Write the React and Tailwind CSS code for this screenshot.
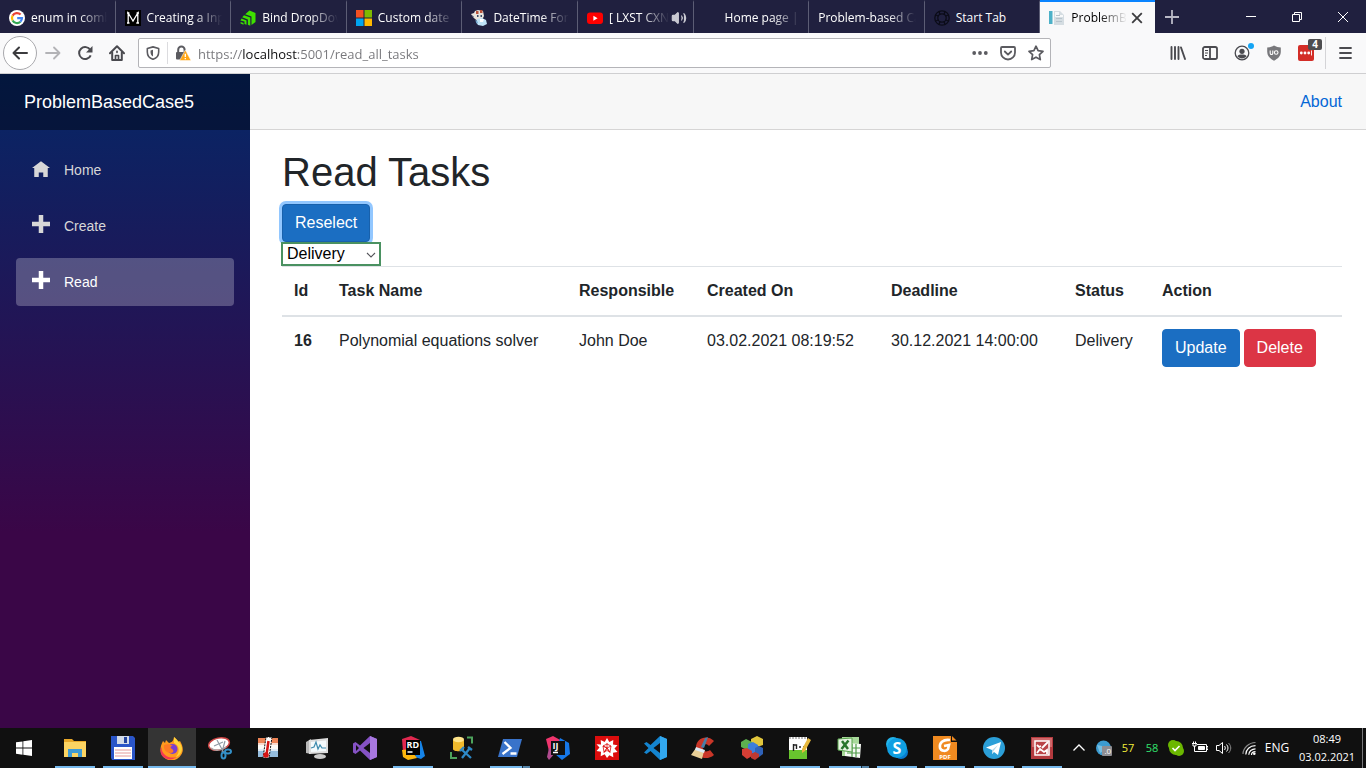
import React from "react";
import { Volume2 } from "lucide-react";

/* ---------- favicons ---------- */

const GoogleIcon = () => (
  <svg viewBox="0 0 16 16" className="size-4 shrink-0">
    <circle cx="8" cy="8" r="8" fill="#fff" />
    <g fill="none" strokeWidth="2.2">
      <path d="M11.6 4.6A5 5 0 0 0 3.6 5.6" stroke="#ea4335" />
      <path d="M3.6 5.6a5 5 0 0 0 0 4.8" stroke="#fbbc05" />
      <path d="M3.6 10.4a5 5 0 0 0 7.8 1.3" stroke="#34a853" />
      <path d="M11.4 11.7A5 5 0 0 0 13 8.1H8.2" stroke="#4285f4" />
    </g>
  </svg>
);

const MIcon = () => (
  <svg viewBox="0 0 16 16" className="size-4 shrink-0">
    <rect width="16" height="16" fill="#000" />
    <path d="M3.2 13V3l4.8 8 4.8-8v10M2 3h2.4M11.6 3H14M2 13h2.5M11.3 13H14" fill="none" stroke="#fff" strokeWidth="1.3" />
  </svg>
);

const TelerikIcon = () => (
  <svg viewBox="0 0 16 16" className="size-4 shrink-0">
    <path fill="#3ee000" d="M9.5.5 15.5 3v9l-4 3V6.5L5.2 4.2z" />
    <path fill="#3ee000" d="M4 5.2l6.3 2.3v8.3l-2.4-1V9.4L2.2 7.3z" />
    <path fill="#3ee000" d="M1.6 8.6l4.9 1.8v4.4l-2-.9v-2.5L.4 10.6zM.6 12l2.9 1.1v1.6L.6 13.5z" />
  </svg>
);

const MicrosoftIcon = () => (
  <svg viewBox="0 0 16 16" className="size-4 shrink-0">
    <path fill="#f25022" d="M0 0h7.5v7.5H0z" />
    <path fill="#7fba00" d="M8.5 0H16v7.5H8.5z" />
    <path fill="#00a4ef" d="M0 8.5h7.5V16H0z" />
    <path fill="#ffb900" d="M8.5 8.5H16V16H8.5z" />
  </svg>
);

const MascotIcon = () => (
  <svg viewBox="0 0 16 16" className="size-4 shrink-0">
    <path fill="#e8e4dc" d="M0 4l3-1 1-2 3-1 5 1 1 5-2 4-4 1-3-2-2-2z" />
    <path fill="#b8543c" d="M5 1h2.500v3H5zM9 0h2.500v3H9z" />
    <path fill="#3a4a66" d="M6 5h1.500v2H6zM9.500 5H11v2H9.500zM1 5l2 2H1.500z" />
    <path fill="#bfe3f7" d="M6 9l5-1 4 2 1 4-4 2-5-1-2-3z" />
    <path fill="#fff" d="M9 9h4l-1 3H9z" />
    <path fill="#6fa6cf" d="M4 10l3 2-1 2z" />
  </svg>
);

const YouTubeIcon = () => (
  <svg viewBox="0 0 16 16" className="size-4 shrink-0">
    <rect y="2.500" width="16" height="11.500" rx="3" fill="#f00" />
    <path d="M6.400 5.800v5l4.200-2.500z" fill="#fff" />
  </svg>
);

const RingIcon = () => (
  <svg viewBox="0 0 16 16" className="size-4 shrink-0" fill="none" stroke="#0b0c18" strokeWidth="1.300">
    <circle cx="8" cy="8" r="7.200" />
    <circle cx="8" cy="8" r="4.200" />
    <path d="M5 1.500l1 3M11 1.500l-1 3M1.500 5l3 1M1.500 11l3-1M14.500 5l-3 1M14.500 11l-3-1M5 14.500l1-3M11 14.500l-1-3" />
  </svg>
);

const DocumentIcon = () => (
  <svg viewBox="0 0 16 16" className="size-4 shrink-0">
    <path fill="#4db1c8" d="M0 1h3.500v13H0z" />
    <path fill="#d5dde2" d="M5 1h6l4 4v10H5z" />
    <path fill="#f7f9fa" d="M6 2h4v3h4v2H6z" />
    <path stroke="#b9c5cd" d="M7 5.500h4M7 8.500h6M7 11.500h6" />
  </svg>
);

const tabs = [
  { title: "enum in comb", icon: <GoogleIcon /> },
  { title: "Creating a Inp", icon: <MIcon /> },
  { title: "Bind DropDov", icon: <TelerikIcon /> },
  { title: "Custom date a", icon: <MicrosoftIcon /> },
  { title: "DateTime Forr", icon: <MascotIcon /> },
  { title: "[ LXST CXN", icon: <YouTubeIcon />, audio: true },
  { title: "Home page |", icon: <span className="size-4 shrink-0" /> },
  { title: "Problem-based Ca", icon: null },
  { title: "Start Tab", icon: <RingIcon />, short: true },
  { title: "ProblemBa", icon: <DocumentIcon />, active: true },
];

function Tab({ tab }) {
  const base = "flex min-w-0 flex-1 items-center border-t-2 pl-[9px] pr-1.5";
  const title = "min-w-0 flex-1 overflow-hidden whitespace-nowrap text-left";
  return (
    <div
      className={
        tab.active
          ? base + " border-[#0a84ff] bg-[#f9f9fa] text-black"
          : base + " border-r border-t-transparent border-r-[#5c5d75] text-white"
      }
    >
      <button type="button" className="flex min-w-0 flex-1 items-center gap-1.5">
        {tab.icon}
        <span
          className={
            tab.short
              ? title
              : title + " [mask-image:linear-gradient(to_left,transparent_2px,black_30px)]"
          }
        >
          {tab.title}
        </span>
      </button>
      {tab.audio && (
        <button type="button" aria-label="Mute tab" className="text-[#c9c9d2]">
          <Volume2 size={16} fill="currentColor" strokeWidth={1.8} />
        </button>
      )}
      {tab.active && (
        <button type="button" aria-label="Close tab" className="mr-1">
          <svg viewBox="0 0 16 16" className="size-4" stroke="#3b3b3e" strokeWidth="1.800">
            <path d="M3.200 3.200l9.600 9.600M12.800 3.200l-9.600 9.600" />
          </svg>
        </button>
      )}
    </div>
  );
}

function TabStrip() {
  return (
    <div className="flex h-[33px] shrink-0 bg-[#20203f] text-xs">
      <div className="flex min-w-0 flex-1">
        {tabs.map((t) => (
          <Tab key={t.title} tab={t} />
        ))}
      </div>
      <button type="button" aria-label="New tab" className="mr-10 flex w-[33px] items-center justify-center">
        <svg viewBox="0 0 16 16" className="size-4" stroke="#b9b9c6" strokeWidth="1.800">
          <path d="M8 1v14M1 8h14" />
        </svg>
      </button>
      <button type="button" aria-label="Minimize" className="flex w-[46px] items-center justify-center">
        <svg viewBox="0 0 10 10" className="size-2.5" stroke="#fff"><path d="M0 4.500h10" /></svg>
      </button>
      <button type="button" aria-label="Restore" className="flex w-[46px] items-center justify-center">
        <svg viewBox="0 0 10 10" className="size-2.5" stroke="#fff" fill="none"><path d="M.5 2.500h7v7h-7zM2.500 2.500v-2h7v7h-2" /></svg>
      </button>
      <button type="button" aria-label="Close" className="flex w-[46px] items-center justify-center">
        <svg viewBox="0 0 10 10" className="size-2.5" stroke="#fff"><path d="M0 0l10 10M10 0L0 10" /></svg>
      </button>
    </div>
  );
}

/* ---------- navigation toolbar ---------- */

function ToolButton({ label, children }) {
  return (
    <button type="button" aria-label={label} className="flex h-8 w-8 shrink-0 items-center justify-center text-[#4a4a4f]">
      {children}
    </button>
  );
}

function Toolbar() {
  return (
    <div className="flex h-[41px] shrink-0 items-center border-b border-[#cfcfd1] bg-[#f9f9fa] pl-[3px] pr-[5px]">
      <button type="button" aria-label="Back" className="flex size-[34px] shrink-0 items-center justify-center rounded-full border border-[#a9a9ad] bg-white">
        <svg viewBox="0 0 16 16" className="size-4" fill="none" stroke="#3b3b3e" strokeWidth="2" strokeLinecap="round" strokeLinejoin="round">
          <path d="M15 8H1.500M7 2.500L1.500 8 7 13.500" />
        </svg>
      </button>
      <ToolButton label="Forward">
        <svg viewBox="0 0 16 16" className="size-4" fill="none" stroke="#b3b3b6" strokeWidth="1.800" strokeLinecap="round" strokeLinejoin="round">
          <path d="M1 8h13.500M9 2.500L14.500 8 9 13.500" />
        </svg>
      </ToolButton>
      <ToolButton label="Reload">
        <svg viewBox="0 0 16 16" className="size-4" fill="none" stroke="currentColor" strokeWidth="2">
          <path d="M13.700 10.300A6 6 0 1 1 13.300 5" />
          <path d="M15.500 1v6.500H9z" fill="currentColor" stroke="none" />
        </svg>
      </ToolButton>
      <ToolButton label="Home page">
        <svg viewBox="0 0 16 16" className="size-4" fill="none" stroke="currentColor" strokeWidth="2" strokeLinejoin="round" strokeLinecap="round">
          <path d="M1 8.200L8 1.200l7 7" />
          <path d="M3.200 7.500V15h9.600V7.500" />
          <path d="M6.500 15v-4.500h3V15M8 6.300v1" strokeWidth="1.700" />
        </svg>
      </ToolButton>

      <div className="ml-[5px] flex h-[30px] min-w-0 flex-1 items-center rounded-xs border border-[#b4b4b8] bg-white text-[#5b5b60]">
        <button type="button" aria-label="Tracking protection" className="flex w-7 shrink-0 items-center justify-center">
          <svg viewBox="0 0 16 16" className="size-3.5" fill="none" stroke="currentColor" strokeWidth="1.800">
            <path d="M8 1l6.500 1.800v4C14.500 11 12 14 8 15.200 4 14 1.500 11 1.500 6.800v-4z" strokeLinejoin="round" />
            <path d="M8 4.300l-2.800.8v2c0 2 .9 3.800 2.800 4.900z" fill="currentColor" stroke="none" />
          </svg>
        </button>
        <span className="h-[22px] w-px shrink-0 bg-[#dcdcdf]" />
        <button type="button" aria-label="Site information" className="flex w-[30px] shrink-0 items-center justify-center">
          <svg viewBox="0 0 16 16" className="size-4">
            <path d="M3.200 8V4.800a3.200 3.200 0 0 1 6.400 0V8" fill="none" stroke="#5b5b60" strokeWidth="2" />
            <path d="M1.500 7h10v7.500h-9.500a1 1 0 0 1-1-1V7.500z" fill="#5b5b60" />
            <path d="M10.300 5L16 15.500H4.600z" fill="#ffa616" stroke="#fff" strokeWidth=".5" />
            <path d="M10.300 8.800v3.200M10.300 13v1.300" stroke="#fff" strokeWidth="1.300" />
          </svg>
        </button>
        <input
          type="text"
          aria-label="Address"
          defaultValue="https://localhost:5001/read_all_tasks"
          className="min-w-0 flex-1 bg-[linear-gradient(to_right,#76767a_44px,#0c0c0d_44px,#0c0c0d_99px,#76767a_99px)] bg-clip-text pt-[3px] text-[13px] text-transparent caret-black outline-none"
        />
        <button type="button" aria-label="Page actions" className="flex w-7 shrink-0 items-center justify-center">
          <svg viewBox="0 0 16 16" className="size-4" fill="currentColor">
            <circle cx="2.200" cy="8" r="1.900" /><circle cx="8" cy="8" r="1.900" /><circle cx="13.800" cy="8" r="1.900" />
          </svg>
        </button>
        <button type="button" aria-label="Save to Pocket" className="flex w-7 shrink-0 items-center justify-center">
          <svg viewBox="0 0 16 16" className="size-4" fill="none" stroke="currentColor" strokeWidth="1.800" strokeLinecap="round" strokeLinejoin="round">
            <path d="M2 2h12a1 1 0 0 1 1 1v4.500a7 7 0 0 1-14 0V3a1 1 0 0 1 1-1z" />
            <path d="M4.800 6.500L8 9.600l3.200-3.100" />
          </svg>
        </button>
        <button type="button" aria-label="Bookmark this page" className="flex w-7 shrink-0 items-center justify-center">
          <svg viewBox="0 0 16 16" className="size-4" fill="none" stroke="currentColor" strokeWidth="1.700" strokeLinejoin="round">
            <path d="M8 1.200l2.100 4.500 4.900.6-3.600 3.400.9 4.900L8 12.200l-4.300 2.400.9-4.900L1 6.300l4.900-.6z" />
          </svg>
        </button>
      </div>

      <div className="ml-[111px] flex items-center">
        <ToolButton label="Library">
          <svg viewBox="0 0 16 16" className="size-4" stroke="currentColor" strokeWidth="1.900" strokeLinecap="round">
            <path d="M1.500 2v12M5 2v12M8.500 2v12M11 2.500l4 11.500" />
          </svg>
        </ToolButton>
        <ToolButton label="Sidebars">
          <svg viewBox="0 0 16 16" className="size-4" fill="none" stroke="currentColor" strokeWidth="1.800">
            <rect x="1" y="2" width="14" height="12" rx="1.800" />
            <path d="M8 2v12" />
            <path d="M3 5.500h3M3 8h3M3 10.500h2" strokeWidth="1" />
          </svg>
        </ToolButton>
        <ToolButton label="Account">
          <span className="relative">
            <svg viewBox="0 0 16 16" className="size-4">
              <circle cx="8" cy="8" r="6.800" fill="none" stroke="currentColor" strokeWidth="1.300" />
              <circle cx="8" cy="6.300" r="2.600" fill="currentColor" />
              <path d="M3.300 11.300C4.500 9.800 6 9.600 8 9.600s3.500.2 4.700 1.700A6 6 0 0 1 8 13.400a6 6 0 0 1-4.700-2.100z" fill="currentColor" />
            </svg>
            <span className="absolute -right-1 -top-0.5 size-1.5 rounded-full bg-[#14a4f4]" />
          </span>
        </ToolButton>
        <ToolButton label="uBlock Origin">
          <svg viewBox="0 0 16 16" className="size-4">
            <path d="M8 .5c2 1.400 4.500 1.800 6.800 2v4.300c0 4.500-3 7-6.800 8.900-3.800-1.900-6.800-4.400-6.800-8.900V2.500C3.500 2.300 6 1.900 8 .5z" fill="#77777b" />
            <path d="M4.200 5.500v2.700a1.300 1.300 0 0 0 2.600 0V5.500" fill="none" stroke="#fff" strokeWidth="1.100" />
            <circle cx="10.200" cy="7.500" r="1.800" fill="none" stroke="#fff" strokeWidth="1.100" />
          </svg>
        </ToolButton>
        <ToolButton label="LastPass">
          <span className="relative">
            <svg viewBox="0 0 16 16" className="size-4">
              <rect width="16" height="16" rx="2" fill="#d32d27" />
              <g fill="#fff"><circle cx="3.300" cy="8" r="1.400" /><circle cx="7" cy="8" r="1.400" /><circle cx="10.700" cy="8" r="1.400" /><path d="M13 5.500h.9v5H13z" /></g>
            </svg>
            <span className="absolute -right-2 -top-1.5 flex h-[11px] w-3.5 items-center justify-center rounded-xs bg-[#4d4d50] text-[10px] font-bold text-white">4</span>
          </span>
        </ToolButton>
        <span className="mx-[3px] h-8 w-px bg-[#d4d4d7]" />
        <ToolButton label="Menu">
          <svg viewBox="0 0 16 16" className="size-4" stroke="currentColor" strokeWidth="1.800" strokeLinecap="round">
            <path d="M3 3h11M3 8h11M3 13h11" />
          </svg>
        </ToolButton>
      </div>
    </div>
  );
}

/* ---------- web page ---------- */

const homeGlyph = <path d="M4 1L0 4h1v4h2V6h2v2h2V3.970L8 4z" />;
const plusGlyph = <path d="M3 0v3H0v2h3v3h2V5h3V3H5V0z" />;

const navItems = [
  { label: "Home", glyph: homeGlyph },
  { label: "Create", glyph: plusGlyph },
  { label: "Read", glyph: plusGlyph, active: true },
];

function Sidebar() {
  return (
    <aside className="w-[250px] shrink-0 bg-[linear-gradient(180deg,#052767_0%,#3a0647_70%)]">
      <div className="flex h-14 items-center bg-black/40 px-6">
        <a href="#home" className="text-lg text-white">ProblemBasedCase5</a>
      </div>
      <nav className="flex flex-col gap-2 px-4 pt-4 text-sm">
        {navItems.map((item) => (
          <a
            key={item.label}
            href={"#" + item.label.toLowerCase()}
            className={
              item.active
                ? "flex h-12 items-center gap-3.5 rounded bg-white/25 px-4 text-white"
                : "flex h-12 items-center gap-3.5 rounded px-4 text-[#d7d7d7]"
            }
          >
            <svg viewBox="0 0 8 8" className="mb-1 size-[18px]" fill="currentColor">{item.glyph}</svg>
            {item.label}
          </a>
        ))}
      </nav>
    </aside>
  );
}

const columns = [
  { label: "Id", width: "w-[45px]" },
  { label: "Task Name", width: "w-[240px]" },
  { label: "Responsible", width: "w-[128px]" },
  { label: "Created On", width: "w-[184px]" },
  { label: "Deadline", width: "w-[184px]" },
  { label: "Status", width: "w-[87px]" },
  { label: "Action", width: "" },
];

function Content() {
  return (
    <div className="min-w-0 flex-1">
      <div className="flex h-14 items-center justify-end border-b border-[#d6d5d5] bg-[#f7f7f7] px-6">
        <a href="#about" className="text-[#0366d6]">About</a>
      </div>
      <main className="pl-8 pr-6 pt-[18px]">
        <h1 className="mb-2 text-[40px] leading-[48px]">Read Tasks</h1>
        <button type="button" className="block h-[38px] rounded border border-[#1861ac] bg-[#1b6ec2] px-3 text-white ring-3 ring-[#268fff]/50">
          Reselect
        </button>
        <div className="relative flex h-6 w-[98px] items-center">
          <select
            aria-label="Status"
            defaultValue="Delivery"
            className="h-[22px] w-full appearance-none border border-[#4a9161] bg-white pl-1 leading-5 text-black outline-1 outline-[#4a9161]"
          >
            <option>Delivery</option>
          </select>
          <svg viewBox="0 0 10 10" className="pointer-events-none absolute right-1 top-2 size-2.5" fill="none" stroke="#55555a" strokeWidth="1.100">
            <path d="M1 3l4 4 4-4" />
          </svg>
        </div>
        <table className="w-full table-fixed border-collapse text-left">
          <thead>
            <tr className="border-b-2 border-t border-b-[#dee2e6] border-t-[#dee2e6]">
              {columns.map((c) => (
                <th key={c.label} scope="col" className={c.width + " p-3 font-bold"}>{c.label}</th>
              ))}
            </tr>
          </thead>
          <tbody>
            <tr className="align-top">
              <th scope="row" className="p-3 font-bold">16</th>
              <td className="p-3">Polynomial equations solver</td>
              <td className="p-3">John Doe</td>
              <td className="p-3">03.02.2021 08:19:52</td>
              <td className="p-3">30.12.2021 14:00:00</td>
              <td className="p-3">Delivery</td>
              <td className="p-3">
                <div className="flex gap-1">
                  <button type="button" className="h-[38px] rounded border border-[#1b6ec2] bg-[#1b6ec2] px-3 text-white">Update</button>
                  <button type="button" className="h-[38px] rounded border border-[#dc3545] bg-[#dc3545] px-3 text-white">Delete</button>
                </div>
              </td>
            </tr>
          </tbody>
        </table>
      </main>
    </div>
  );
}

/* ---------- taskbar ---------- */

const apps = [
  { name: "File Explorer", open: true, art: (
    <>
      <path d="M1 3h8l2 2h12v16H1z" fill="#e8a829" /><path d="M1 6h22v15H1z" fill="#fcd462" />
      <path d="M5 21v-8h14v8h-4v-4H9v4z" fill="#3f9bd4" />
    </>
  ) },
  { name: "Total Commander", open: true, art: (
    <>
      <path d="M0 0h22l2 2v22H1l-1-2z" fill="#2a55c8" /><path d="M6 0h12v8H6z" fill="#d3dbe8" /><path d="M13 1h3v6h-3z" fill="#2445a0" />
      <path d="M3 11h18v12H3z" fill="#fff" /><path d="M4 14h16M4 17h16M4 20h16" stroke="#e59a9a" strokeWidth="1" />
    </>
  ) },
  { name: "Firefox", open: true, active: true, art: (
    <>
      <path d="M3 5l2 2 1-3 3 3c3-1 4-1 5-6 2 1 3 3 4 5l2-1c3 5 4 10 1 14a11 11 0 0 1-19 0C-1 14 1 9 3 5z" fill="#ff9a1e" />
      <path d="M1.500 11c0 9 9 12 15 10-4 4-12 3-15-2-1.500-3-1-6 0-8z" fill="#f43a52" />
      <path d="M14 1c3 3 7 6 8 11 0 5-3 8-6 9 4-5 4-11-2-14z" fill="#ffd43a" />
      <circle cx="12.500" cy="13" r="5" fill="#7a3fd0" />
      <path d="M4 9c3-1 6-1 9 1-3 0-3 2-1 3 2 1 2 4-1 4-4 0-8-3-7-8z" fill="#ff7a24" />
    </>
  ) },
  { name: "Snipping Tool", art: (
    <>
      <ellipse cx="11" cy="8" rx="10.500" ry="6" fill="#fff" stroke="#c44" strokeWidth="1.500" transform="rotate(-12 11 8)" />
      <path d="M3 12c3 3 10 3 15-1" stroke="#aaa" strokeWidth="1.500" fill="none" />
      <path d="M9 4l7 13M17 5l-3 11M6 10l9-4" stroke="#8f9aa5" strokeWidth="1.200" />
      <g fill="none" stroke="#3390c8" strokeWidth="2"><ellipse cx="15.500" cy="19.500" rx="2" ry="3" /><ellipse cx="20" cy="15.500" rx="3" ry="2" /></g>
    </>
  ) },
  { name: "Core Temp", art: (
    <>
      <path d="M2 2h20v19H2z" fill="#f5ede2" /><path d="M2 2h20v7H2z" fill="#ed8456" /><path d="M2 13h20v8H2z" fill="#95bddd" /><path d="M2 7h20v8H2z" fill="#fff" opacity=".7" />
      <path d="M10 1h6l-3 21H7z" fill="#fff" stroke="#111" strokeDasharray="2 1" />
      <path d="M12.500 5l-2 14" stroke="#d51414" strokeWidth="2.500" /><circle cx="10" cy="19" r="2.800" fill="#d51414" />
    </>
  ) },
  { name: "Resource Monitor", art: (
    <>
      <path d="M1 6l5-3v15l-5-1z" fill="#b8b8b8" /><path d="M4 4l19-2v15L4 18z" fill="#ddd" /><path d="M6 6l15-1.500V15L6 16z" fill="#f4fafc" />
      <path d="M6 12l3-1 2-5 2 7 2-4 2 3h4" stroke="#3d8aad" fill="none" strokeWidth="1.200" />
      <ellipse cx="15" cy="20.500" rx="6" ry="2.500" fill="#ccc" />
    </>
  ) },
  { name: "Visual Studio", art: (
    <>
      <path fillRule="evenodd" d="M17 0l7 3v18l-7 3-10-9.500L2.500 18 0 16.500v-9L2.500 6 7 9.500zM17 7l-6.500 5 6.500 5zM3 9v6l3-3z" fill="#8552c4" />
      <path d="M17 0l7 3v18l-7 3z" fill="#a878e0" />
    </>
  ) },
  { name: "Rider", open: true, art: (
    <>
      <path d="M1 3l9-3 9 4 1 8-12 8-6-4z" fill="#e0284f" /><path d="M17 5l3 0 4 15-4 3-6-2z" fill="#1684e8" /><path d="M1 14l8-1 7 9-9 2-5-3z" fill="#fdb60d" />
      <path d="M5 4h14v15H5z" fill="#000" /><text x="5.500" y="12" fontSize="9" fontWeight="700" fill="#fff">RD</text><path d="M6.500 16h5" stroke="#fff" strokeWidth="1.500" />
    </>
  ) },
  { name: "SQL Server Data Tools", art: (
    <>
      <path d="M3 4v9c0 3 11 3 11 0V4z" fill="#f0b92c" /><ellipse cx="8.500" cy="3.500" rx="5.500" ry="2.700" fill="#ffe48a" />
      <path d="M17 1.500h5v6M1 16v6h6" fill="none" stroke="#4da35c" strokeWidth="2" />
      <path d="M11 13l10 9M20 12l-8 10M10 15l4-4M18 11l4 3" stroke="#2d89c8" strokeWidth="2.300" />
    </>
  ) },
  { name: "PowerShell", open: true, multi: true, art: (
    <>
      <path d="M5 3h19l-5 18H0z" fill="#3973ca" /><path d="M6.500 6l6 6-8 6M12.500 17.500h6" fill="none" stroke="#fff" strokeWidth="2.300" />
    </>
  ) },
  { name: "IntelliJ IDEA", art: (
    <>
      <path d="M0 3l7-3 9 5-5 8-8 2z" fill="#f0356d" /><path d="M14 2l9 5 1 11-8 6-7-6z" fill="#1678ea" /><path d="M3 12l6 5-6 7-2-3z" fill="#b04b8f" />
      <path d="M5 5h14v14H5z" fill="#111" /><text x="6.500" y="13" fontSize="9" fontWeight="700" fill="#fff">IJ</text><path d="M7 16.500h5" stroke="#fff" strokeWidth="1.500" />
    </>
  ) },
  { name: "Mathematica", art: (
    <>
      <path d="M0 0h24v24H0z" fill="#dc0d0d" />
      <path d="M12 2l2.300 4 4-2-.3 4.500 4.500.8-3 3.300 3 3.300-4.500.8.300 4.500-4-2L12 22l-2.300-3.800-4 2 .3-4.500-4.500-.8 3-3.300-3-3.300L6 8.500 5.700 4l4 2z" fill="#fff" />
      <path d="M12 7v5l-4-2 4 2-3 4.500L12 12l3 4.500L12 12l4-2M8 10l1 6 3-1.500 3 1.500 1-6-4-2z" fill="none" stroke="#dc0d0d" strokeWidth=".8" />
    </>
  ) },
  { name: "Visual Studio Code", art: (
    <>
      <path fillRule="evenodd" d="M17 0l7 3v18l-7 3-9.500-9L3.500 18 1 16.500 5.500 12 1 7.500 3.500 6l4 3zM17 7l-6.500 5 6.500 5z" fill="#1484cf" />
      <path d="M17 0l7 3v18l-7 3z" fill="#32a8ef" />
    </>
  ) },
  { name: "CCleaner", art: (
    <>
      <path d="M23 5C16-2 4 2 5 13c1 9 11 12 18 6l-4-5c-4 3-8 1-7-3 0-3 4-4 6-1z" fill="#c93628" />
      <path d="M14 2l3-1-4 11-3-1z" fill="#497fa8" /><path d="M5 12l8 3-2 8-11-4z" fill="#e9cf97" /><path d="M5 11l9 3-1 3-9-3z" fill="#dceaf4" />
    </>
  ) },
  { name: "Cubes", art: (
    <>
      <path d="M11 3l6-3 6 3v6l-6 2-6-3z" fill="#e1c63c" /><path d="M1 6l5-3 6 3v5l-5 3-6-3z" fill="#5cb04f" /><path d="M8 8l5-2 5 3v6l-5 3-5-3z" fill="#3c7edc" />
      <path d="M2 13l5-1 5 3v5l-5 3-5-4z" fill="#d53e35" /><path d="M15 12l4-2 4 2v6l-4 3-4-2z" fill="#2f62b8" /><path d="M11 18l4-2 4 2v3l-4 3-4-2z" fill="#be3932" />
    </>
  ) },
  { name: "Notepad++", open: true, art: (
    <>
      <path d="M1 1h18v22H1z" fill="#fff" /><path d="M1 14h18v9H1z" fill="#68c52e" /><path d="M2 1v2M5 1v2M8 1v2M11 1v2M14 1v2M17 1v2" stroke="#777" />
      <path d="M5.500 8v7M5.500 9h3v4M11 11h2M15 11h2" stroke="#222" fill="none" strokeWidth="1.400" /><path d="M20 2l3 2-6 11-3 2v-4z" fill="#e7b83c" />
    </>
  ) },
  { name: "Excel", open: true, multi: true, art: (
    <>
      <path d="M5 1h17v19H5z" fill="#a9d99b" /><path d="M8 7l16 1-1 14-15-2z" fill="#f7fbf5" /><path d="M10 12h13M10 17h13M15 8v13M19 8v13" stroke="#4e9b48" strokeWidth="1.200" />
      <path d="M1 3l14-1v14L1 14z" fill="#e7f4e3" stroke="#58a34d" /><path d="M5 5l6 8M11.500 4.500L4.500 13" stroke="#28752c" strokeWidth="2.500" />
    </>
  ) },
  { name: "Skype", open: true, art: (
    <>
      <rect x="1" y="1" width="14" height="14" rx="7" fill="#22b5ec" /><rect x="9" y="9" width="14" height="14" rx="7" fill="#087bd0" /><circle cx="12" cy="12" r="10" fill="#109fe2" />
      <text x="12" y="18" fontSize="16" fontWeight="700" textAnchor="middle" fill="#fff">S</text>
    </>
  ) },
  { name: "Foxit PDF", open: true, art: (
    <>
      <path d="M0 0h18l6 6v18H0z" fill="#f08a20" /><path d="M18 0v6h6V0z" fill="#111" /><path d="M19 0l4.500 4.500H19z" fill="#f08a20" />
      <path d="M17 4C10 3 6 7 7 12c1 3 6 4 8 1l1-4-5 1" fill="none" stroke="#fff" strokeWidth="2.600" />
      <text x="12" y="23" fontSize="6" fontWeight="700" textAnchor="middle" fill="#fff">PDF</text>
    </>
  ) },
  { name: "Telegram", open: true, art: (
    <>
      <circle cx="12" cy="12" r="11" fill="#2b9fd8" /><path d="M4 11.500L19 6l-3 13-4-3-2 2v-4z" fill="#fff" /><path d="M10 14l6-5-4.500 6L10 18z" fill="#b8d9ea" />
    </>
  ) },
  { name: "Image Editor", open: true, art: (
    <>
      <path d="M1 1h22v22H1z" fill="#b33a3e" /><path d="M2 2h20v9H2z" fill="#d0686a" /><path d="M5 5h14v14H5z" fill="#b94347" stroke="#fff" strokeWidth="1.500" />
      <path d="M12 12l6-6M7 9l2 2 2-1M7 17l3-4 4 3 3-2v4" stroke="#fff" strokeWidth="1.800" fill="none" />
    </>
  ) },
];

function Taskbar() {
  return (
    <footer className="flex h-10 shrink-0 bg-[#101010] text-xs text-white">
      <button type="button" aria-label="Start" className="mr-[3px] flex w-12 shrink-0 items-center justify-center">
        <svg viewBox="0 0 16 16" className="size-4" fill="#fff">
          <path d="M0 2.300l6.500-.9v6.200H0zM7.300 1.300L16 0v7.600H7.300zM0 8.400h6.500v6.300L0 13.800zM7.300 8.400H16V16l-8.700-1.200z" />
        </svg>
      </button>
      <div className="flex min-w-0 flex-1 justify-between">
        {apps.map((a) => (
          <button
            type="button"
            key={a.name}
            aria-label={a.name}
            className={a.active ? "flex w-12 flex-col items-center bg-[#343434]" : "flex w-12 flex-col items-center"}
          >
            <span className="flex h-[38px] items-center pt-0.5">
              <svg viewBox="0 0 24 24" className="size-6">{a.art}</svg>
            </span>
            {a.open && (
              <span className={a.active ? "flex h-0.5 w-full bg-[#76b9ed]" : "flex h-0.5 w-10 justify-end bg-[#76b9ed]"}>
                {a.multi && <span className="w-2 border-l border-[#1b2c3a] bg-[#5584a8]" />}
              </span>
            )}
          </button>
        ))}
      </div>
      <div className="flex shrink-0 items-center">
        <button type="button" aria-label="Hidden icons" className="flex w-[26px] justify-center">
          <svg viewBox="0 0 12 12" className="size-3" fill="none" stroke="#fff" strokeWidth="1.300"><path d="M.5 8.500L6 3l5.500 5.500" /></svg>
        </button>
        <span className="flex w-6 justify-center">
          <svg viewBox="0 0 16 16" className="size-4">
            <circle cx="7.500" cy="8" r="7.500" fill="#3c9cd1" /><path d="M1 5l5 1 3 4-5 3z" fill="#75bfe3" /><rect x="6" y="6" width="10" height="10" rx="1" fill="#8e8e93" /><text x="8.500" y="14" fontSize="8" fill="#fff">.0</text>
          </svg>
        </span>
        <span className="w-6 text-center text-[11px] text-[#f2ee3a]">57</span>
        <span className="w-6 text-center text-[11px] text-[#32e36e]">58</span>
        <span className="flex w-6 justify-center">
          <svg viewBox="0 0 16 16" className="size-4">
            <circle cx="5" cy="5" r="5" fill="#6bb700" /><circle cx="11" cy="11" r="5" fill="#6bb700" /><circle cx="8" cy="8" r="7" fill="#6bb700" /><path d="M4.500 8l2.500 2.500 4.500-4.500" fill="none" stroke="#fff" strokeWidth="1.600" />
          </svg>
        </span>
        <span className="flex w-6 justify-center">
          <svg viewBox="0 0 16 16" className="size-4" fill="none" stroke="#fff">
            <path d="M5 4.500h9.500v7H3.500M14.500 6.500H16v3h-1.500" /><path d="M6.500 6.500h6v3h-6z" fill="#fff" />
            <path d="M0 3.500h5M1.500 1.500v2M3.500 1.500v2M1 4v2h3V4M2.500 6v5.500h2" />
          </svg>
        </span>
        <span className="flex w-6 justify-center">
          <svg viewBox="0 0 16 16" className="size-4" fill="none" stroke="#fff">
            <path d="M.5 5.500h2.500l3.500-3v11l-3.500-3H.5z" /><path d="M8.500 6c1 1.200 1 2.800 0 4M10.500 4.500c2 2 2 5 0 7" /><path d="M12.500 3c3 3 3 7 0 10" stroke="#8b8b8b" />
          </svg>
        </span>
        <span className="flex w-[26px] justify-center">
          <svg viewBox="0 0 16 16" className="size-4" fill="none" stroke="#fff" strokeWidth="1.200">
            <path d="M2 14C2 8 8 2.500 14.500 2.500" stroke="#8b8b8b" /><path d="M4.800 14.500c0-5 4-8.800 9.700-8.800M7.800 14.800c0-3.500 3-6 6.700-6M10.500 15c0-2 1.500-3.300 4-3.300" /><circle cx="13.300" cy="13.800" r="1.300" fill="#fff" stroke="none" />
          </svg>
        </span>
        <span className="w-[30px] text-center">ENG</span>
        <time className="w-[70px] text-center text-[11px] leading-[18px]">
          08:49
          <br />
          03.02.2021
        </time>
        <span className="h-10 w-1 border-l border-[#77777a]" />
      </div>
    </footer>
  );
}

export default function App() {
  return (
    <div className="flex h-screen flex-col overflow-hidden bg-white font-['Open_Sans','Noto_Sans',sans-serif]">
      <TabStrip />
      <Toolbar />
      <div className="flex min-h-0 flex-1 font-['Liberation_Sans',Arial,sans-serif] text-base text-[#212529]">
        <Sidebar />
        <Content />
      </div>
      <Taskbar />
    </div>
  );
}
